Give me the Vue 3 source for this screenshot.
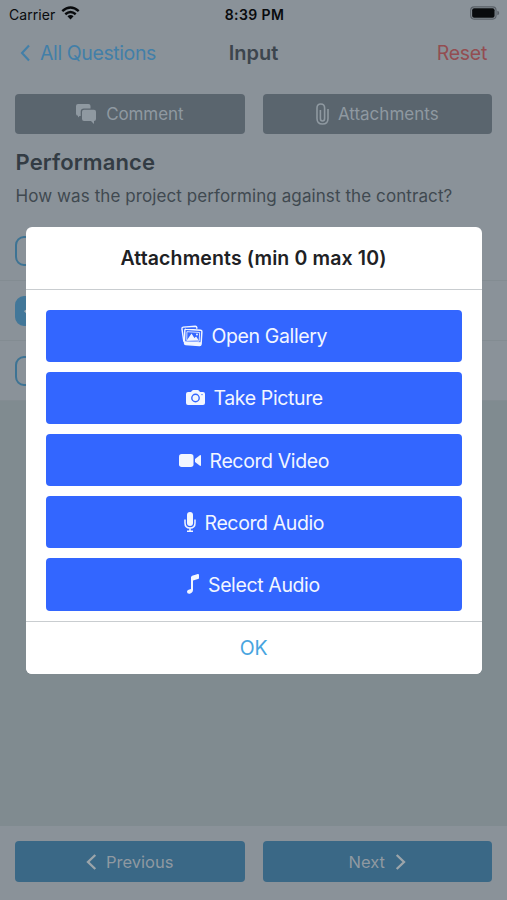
<script setup>
const actions = [
  { id: "gallery", label: "Open Gallery", width: 115 },
  { id: "camera", label: "Take Picture", width: 108 },
  { id: "video", label: "Record Video", width: 119 },
  { id: "mic", label: "Record Audio", width: 119 },
  { id: "note", label: "Select Audio", width: 112 }
]

const options = [
  { id: 1, checked: false },
  { id: 2, checked: true },
  { id: 3, checked: false }
]
</script>


<template>
  <div class="screen">
    <div class="status-bar">
      <div class="carrier">
        <span>Carrier</span>

        <svg class="wifi" viewBox="0 0 20 15">
          <path d="M1.2 5.5Q10-2.4 18.8 5.5M4.4 8.8Q10 4 15.6 8.8" />
          <path class="wifi-dot" d="M6.7 11Q10 8.1 13.3 11L10 14.4Z" />
        </svg>
      </div>

      <span class="clock">8:39 PM</span>

      <svg class="battery" viewBox="0 0 31 14">
        <rect class="battery-case" x=".7" y=".7" width="26.2" height="12.6" rx="3.6" />
        <rect x="2.2" y="2.2" width="23.2" height="9.6" rx="2" />
        <path class="battery-tip" d="M28.2 4.7Q30.2 5.3 30.2 7Q30.2 8.7 28.2 9.3Z" />
      </svg>
    </div>


    <nav class="nav-bar">
      <div class="back">
        <svg class="back-icon" viewBox="0 0 11 18">
          <path d="M9 1.5L2 9L9 16.5" />
        </svg>
        <span>All Questions</span>
      </div>

      <span class="nav-title">Input</span>

      <span class="reset">Reset</span>
    </nav>


    <div class="tools">
      <button class="tool comment">
        <svg class="comment-icon" viewBox="0 0 21 20">
          <path d="M2 0H12.5Q14.5 0 14.5 2V4.5H8Q4.7 4.5 4.7 7.5V12H3.5L2 13.5V11.8Q0 11.6 0 9.8V2Q0 0 2 0Z" />
          <path d="M8 5.8H18Q20 5.8 20 7.8V15Q20 17 18 17V20L15 17H8Q6 17 6 15V7.8Q6 5.8 8 5.8Z" />
        </svg>
        <span>Comment</span>
      </button>

      <button class="tool attach">
        <svg class="clip-icon" viewBox="0 0 13 22">
          <path d="M12 6V15.5Q12 21 6.5 21Q1 21 1 15.5V5Q1 1 4.8 1Q8.6 1 8.6 5V15.5Q8.6 18 6.5 18Q4.4 18 4.4 15.5V7" />
        </svg>
        <span>Attachments</span>
      </button>
    </div>


    <div class="question">
      <h2>Performance</h2>
      <p>How was the project performing against the contract?</p>
    </div>


    <div class="options">
      <div v-for="option in options" :key="option.id" class="option">
        <span class="checkbox" :class="{ checked: option.checked }">
          <svg v-if="option.checked" viewBox="0 0 26 26">
            <path d="M8 13L12 17L19 9" />
          </svg>
        </span>
      </div>
    </div>


    <div class="spacer"></div>


    <footer class="pager">
      <button class="page-button previous">
        <svg class="chevron" viewBox="0 0 11 16">
          <path d="M9.3 1L2 8L9.3 15" />
        </svg>
        <span>Previous</span>
      </button>

      <button class="page-button next">
        <span>Next</span>
        <svg class="chevron" viewBox="0 0 11 16">
          <path d="M1.7 1L9 8L1.7 15" />
        </svg>
      </button>
    </footer>


    <div class="overlay">
      <section class="modal">
        <h3 class="modal-title">Attachments (min 0 max 10)</h3>

        <div class="modal-body">
          <button
              v-for="action in actions"
              :key="action.id"
              class="action"
              :class="action.id"
          >
            <svg v-if="action.id === 'gallery'" class="icon" viewBox="0 0 23 22">
              <path class="line" d="M3 17L1 3.5Q.8 2 2.3 1.7L15 .8Q16.3.8 16.5 2V3.5" />
              <path class="line" d="M5.2 4L20.4 5Q22 5.2 21.8 6.7L21 19.5Q20.8 21 19.3 20.9L4.8 19.8Q3.5 19.7 3.6 18.2L4 5.2Q4.1 3.9 5.2 4Z" />
              <path d="M3.8 16.5L21.2 17.5L20.7 21L5 20Q3.8 19.8 3.8 18Z" />
              <path class="thin" d="M6.2 6.5L19.5 7.3L19 16.5L6 15.7Z" />
              <path d="M6.5 14.8L11 8.5L14 13L15.8 11.6L18.6 15.7L6.5 15.5Z" />
              <circle cx="16.7" cy="9.4" r="1" />
            </svg>

            <svg v-else-if="action.id === 'camera'" class="icon" viewBox="0 0 19 15">
              <path d="M2 2H5L6.2.6Q6.6 0 7.4 0H11.6Q12.4 0 12.8.6L14 2H17Q19 2 19 4V13Q19 15 17 15H2Q0 15 0 13V4Q0 2 2 2Z" />
              <circle class="lens" cx="9.5" cy="8" r="3.7" />
              <circle class="lens-dot" cx="16" cy="4.6" r=".7" />
            </svg>

            <svg v-else-if="action.id === 'video'" class="icon" viewBox="0 0 22 13">
              <rect width="14.5" height="13" rx="2.7" />
              <path d="M16 5L20.6 1.4Q22 .5 22 2V11Q22 12.5 20.6 11.6L16 8Z" />
            </svg>

            <svg v-else-if="action.id === 'mic'" class="icon" viewBox="0 0 12 20">
              <rect x="3" width="6" height="14" rx="3" />
              <path class="mic-line" d="M1 7.5V11Q1 16 6 16Q11 16 11 11V7.5M6 16V19M3 19.2H9" />
            </svg>

            <svg v-else class="icon" viewBox="0 0 12 20">
              <path d="M4 3.5Q4 2.2 5.2 1.8L10.8.1Q12 0 12 1V4Q12 4.8 11 5L6 6.4V16Q6 18 4.3 19L2.8 19.8Q0 20.2 0 17.8Q0 16.3 1.6 15.8L4 15.1Z" />
            </svg>

            <span
                class="action-label"
                :style="{ width: action.width + 'px' }"
            >{{ action.label }}</span>
          </button>
        </div>

        <button class="ok">OK</button>
      </section>
    </div>
  </div>
</template>


<style>
body {
  margin: 0;
}
</style>


<style scoped>
.screen {
  position: relative;
  display: flex;
  flex-direction: column;
  width: 507px;
  height: 900px;
  overflow: hidden;
  box-sizing: border-box;
  background: #8a9299;
  font-family: Inter, "Liberation Sans", sans-serif;
}

button {
  margin: 0;
  padding: 0;
  border: 0;
  font: inherit;
}

svg {
  display: block;
  flex: none;
  overflow: visible;
  fill: currentColor;
}

span {
  white-space: nowrap;
}

.status-bar,
.nav-bar {
  display: grid;
  grid-template-columns: 1fr auto 1fr;
  align-items: center;
  flex: none;
}

.status-bar {
  height: 28px;
  padding: 0 7px 0 9px;
  color: #090b0d;
  font-size: 14px;
}

.carrier {
  display: flex;
  align-items: center;
  gap: 6px;
  letter-spacing: 0.06px;
}

.wifi {
  width: 19px;
  height: 14px;
  margin-top: -2px;
}

.wifi path {
  fill: none;
  stroke: currentColor;
  stroke-width: 2.6;
}

.wifi .wifi-dot {
  fill: currentColor;
  stroke: none;
}

.clock {
  font-weight: 600;
  letter-spacing: 0.42px;
}

.battery {
  justify-self: end;
  width: 30px;
  height: 14px;
  margin-top: -2px;
}

.battery-case {
  fill: none;
  stroke: #596067;
  stroke-width: 1.2;
}

.battery-tip {
  fill: #596067;
}

.nav-bar {
  height: 50px;
  padding: 0 20px;
  font-size: 20px;
}

.back {
  display: flex;
  align-items: center;
  gap: 9px;
  color: #427fa8;
  font-size: 19.5px;
  letter-spacing: -0.4px;
}

.back-icon {
  width: 11px;
  height: 18px;
}

.back-icon path {
  fill: none;
  stroke: currentColor;
  stroke-width: 2.1;
}

.nav-title {
  color: #3c454d;
  font-weight: 600;
}

.reset {
  justify-self: end;
  color: #934d51;
  font-size: 19.5px;
  letter-spacing: -0.3px;
}

.tools,
.pager {
  display: flex;
  flex: none;
  gap: 18px;
  padding: 0 15px;
}

.tools {
  height: 40px;
  margin-top: 16px;
}

.tool,
.page-button {
  display: flex;
  flex: 1;
  align-items: center;
  justify-content: center;
  border-radius: 4px;
  color: #8f99a1;
}

.tool {
  background: #5a656e;
  font-size: 17px;
}

.comment {
  gap: 9px;
  letter-spacing: -0.1px;
}

.comment-icon {
  width: 21px;
  height: 20px;
}

.attach {
  gap: 9px;
}

.clip-icon {
  width: 13px;
  height: 22px;
}

.clip-icon path {
  fill: none;
  stroke: currentColor;
  stroke-width: 1.6;
}

.question {
  flex: none;
  height: 87px;
  padding: 0 15.5px;
  box-sizing: border-box;
}

.question h2 {
  margin: 14px 0 0;
  color: #333c44;
  font-size: 22px;
  font-weight: 600;
  letter-spacing: 0.12px;
  line-height: 28px;
}

.question p {
  margin: 8px 0 0;
  color: #404950;
  font-size: 17px;
  letter-spacing: 0.09px;
  line-height: 24px;
  white-space: nowrap;
}

.options {
  flex: none;
  height: 180px;
}

.option {
  display: flex;
  align-items: center;
  height: 60px;
  padding-left: 15px;
  box-sizing: border-box;
  border-bottom: 1px solid #838c92;
}

.checkbox {
  width: 29px;
  height: 30px;
  margin-top: 1px;
  box-sizing: border-box;
  border: 2px solid #3d7394;
  border-radius: 9px;
}

.checkbox.checked {
  border-color: #427799;
  background: #427799;
  color: #a4adb3;
}

.checkbox path {
  fill: none;
  stroke: currentColor;
  stroke-width: 2;
}

.spacer {
  flex: 1;
  background: #808b90;
}

.pager {
  height: 74px;
  padding-top: 15px;
  padding-bottom: 18px;
  box-sizing: border-box;
}

.page-button {
  background: #3a6886;
  font-size: 16.5px;
}

.previous {
  gap: 9px;
}

.next {
  gap: 10px;
}

.chevron {
  width: 11px;
  height: 16px;
}

.chevron path {
  fill: none;
  stroke: #9ca5aa;
  stroke-width: 2.3;
}

.overlay {
  position: absolute;
  inset: 0;
  display: flex;
  align-items: center;
  justify-content: center;
}

.modal {
  display: flex;
  flex-direction: column;
  width: 456px;
  height: 447px;
  overflow: hidden;
  border-radius: 6px;
  background: #fff;
}

.modal-title {
  height: 63px;
  margin: 0;
  box-sizing: border-box;
  border-bottom: 1px solid #c9cdd0;
  color: #202124;
  font-size: 19.5px;
  font-weight: 600;
  letter-spacing: 0.13px;
  line-height: 63px;
  text-align: center;
}

.modal-body {
  display: flex;
  flex: 1;
  flex-direction: column;
  gap: 10px;
  padding: 20px 20px 10px;
}

.action {
  display: flex;
  flex: 1;
  align-items: center;
  justify-content: center;
  gap: 9px;
  border-radius: 4px;
  background: #3366ff;
  color: #f2f6ff;
  font-size: 19.5px;
}

.action-label {
  padding-top: 1px;
  text-align: left;
  letter-spacing: -0.38px;
}

.gallery .icon {
  width: 22px;
  height: 22px;
}

.camera .icon {
  width: 19px;
  height: 15px;
}

.video .icon {
  width: 22px;
  height: 13px;
}

.mic .icon,
.note .icon {
  width: 12px;
  height: 20px;
}

.line,
.thin,
.mic-line {
  fill: none;
  stroke: currentColor;
  stroke-width: 1.5;
}

.thin {
  stroke-width: 0.9;
}

.lens {
  fill: none;
  stroke: #3366ff;
  stroke-width: 1.4;
}

.lens-dot {
  fill: #3366ff;
}

.ok {
  height: 53px;
  border-top: 1px solid #c9cdd0;
  background: #fff;
  color: #48a5df;
  font-size: 19.5px;
  letter-spacing: -0.3px;
}
</style>
